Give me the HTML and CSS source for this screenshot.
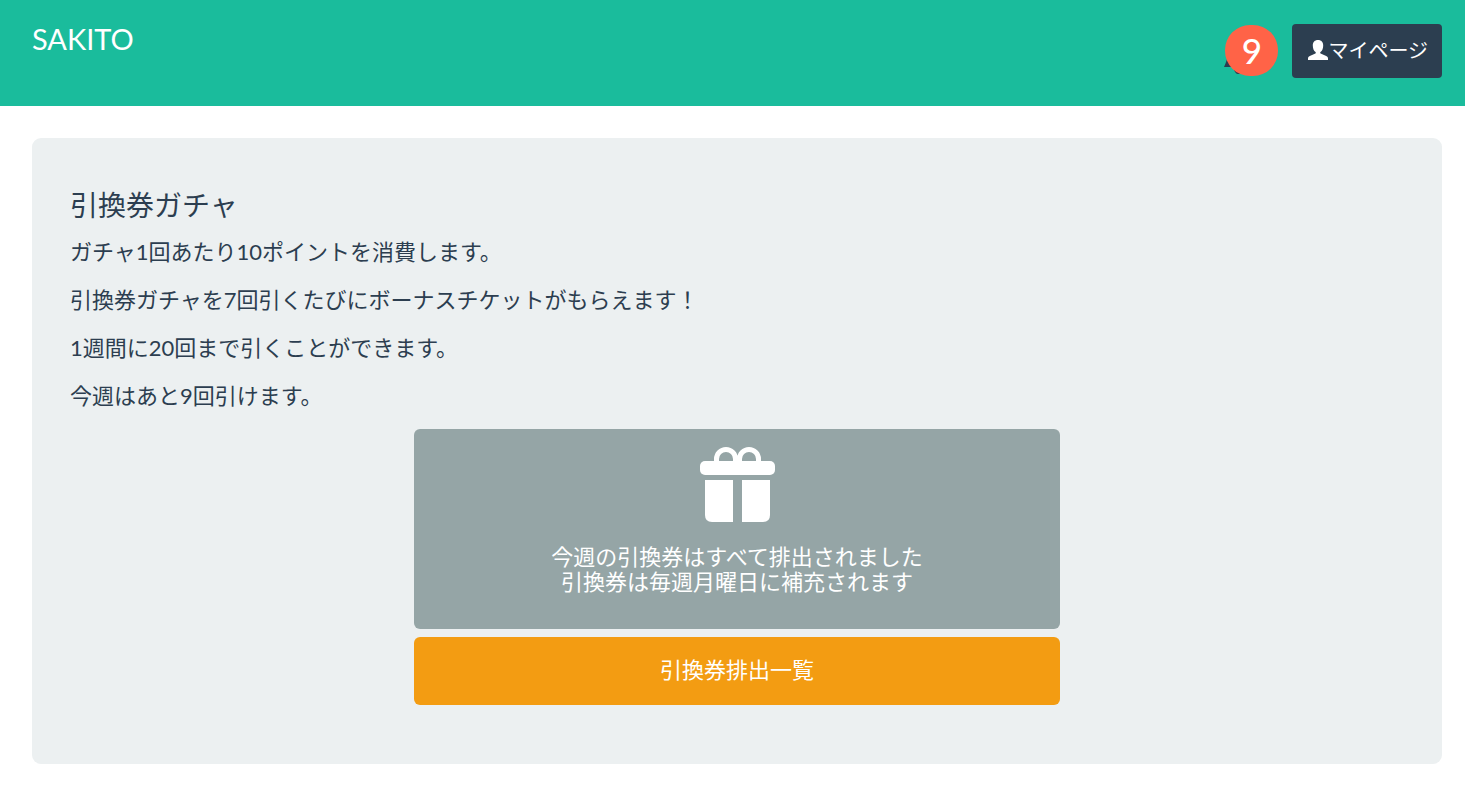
FILE: index.html
```html
<!DOCTYPE html>
<html lang="ja">
<head>
<meta charset="utf-8">
<meta name="viewport" content="width=device-width, initial-scale=1">
<title>SAKITO</title>
<link rel="stylesheet" href="styles.css">
</head>
<body>
<header class="navbar">
  <a class="brand" href="#">SAKITO</a>
  <div class="nav-actions">
    <a class="notifications" href="#" aria-label="お知らせ">
      <svg class="bell" viewBox="0 0 26 26" aria-hidden="true">
        <path d="M13 0a2 2 0 0 1 2 2c4 1 6 4 6 7 0 4 2 6 5 10H0c1-2 2-5 3-8C4 6 5 3 11 2a2 2 0 0 1 2-2zM10 22h8c0 3-2 4-4 4s-3-2-4-4z"/>
      </svg>
      <span class="badge">9</span>
    </a>
    <button class="mypage" type="button">
      <svg class="user" viewBox="0 0 20 20" aria-hidden="true">
        <path d="M10 0c3.300 0 5.200 2.200 5.200 5.500 0 2.900-1 5.300-2.700 6.500-.4.300-.4 1.300.1 1.600l5.600 2.500c1.200.6 1.800 1.400 1.800 2.400V20H0v-1.500c0-1 .6-1.800 1.800-2.400l5.600-2.500c.5-.3.5-1.300.1-1.600C5.800 10.800 4.800 8.400 4.800 5.500 4.800 2.200 6.700 0 10 0z"/>
      </svg><span>マイページ</span>
    </button>
  </div>
</header>
<main class="panel">
  <h1 class="title">引換券ガチャ</h1>
  <p class="text">ガチャ1回あたり10ポイントを消費します。</p>
  <p class="text">引換券ガチャを7回引くたびにボーナスチケットがもらえます！</p>
  <p class="text">1週間に20回まで引くことができます。</p>
  <p class="text">今週はあと9回引けます。</p>
  <div class="actions">
    <button class="action draw" type="button">
      <svg class="gift" viewBox="0 0 75 75" aria-hidden="true">
        <path fill="none" stroke="#fff" stroke-width="5" d="M16.500 15v-3a9.500 9.500 0 0 1 19 0v3M39.500 15v-3a9.500 9.500 0 0 1 19 0v3"/>
        <rect y="14" width="75" height="14" rx="5"/>
        <path d="M5 33h28v42H12q-7 0-7-7zM42 33h28v35q0 7-7 7H42z"/>
      </svg>
      <span>今週の引換券はすべて排出されました<br>引換券は毎週月曜日に補充されます</span>
    </button>
    <button class="action list" type="button">引換券排出一覧</button>
  </div>
</main>
</body>
</html>
```
FILE: styles.css
```css
* {
  box-sizing: border-box;
}

body {
  margin: 0;
  background: #fff;
  color: #2c3e50;
  font-family: Lato, "Noto Sans CJK JP", sans-serif;
  font-size: 22px;
  line-height: 32px;
}

button {
  border: 0;
  color: #fff;
  font: inherit;
  cursor: pointer;
}

.navbar {
  display: flex;
  align-items: flex-start;
  justify-content: space-between;
  min-height: 106px;
  padding: 24px 23px 24px 32px;
  background: #1abc9c;
}

.brand {
  color: #fff;
  font-size: 29px;
  line-height: 30px;
  text-decoration: none;
}

.nav-actions {
  display: flex;
  gap: 14px;
}

.notifications {
  position: relative;
  width: 54px;
  height: 54px;
}

.bell {
  position: absolute;
  bottom: 4px;
  left: 0;
  width: 26px;
  height: 26px;
  fill: #2c3e50;
}

.badge {
  position: absolute;
  top: 1px;
  right: 0;
  width: 53px;
  height: 51px;
  border-radius: 25px;
  background: #ff6347;
  color: #fff;
  font-size: 35px;
  font-weight: 500;
  line-height: 50px;
  text-align: center;
}

.mypage {
  display: flex;
  align-items: center;
  height: 54px;
  padding: 0 14px 2px 16px;
  border-radius: 4px;
  background: #2c3e50;
  font-size: 20px;
}

.user {
  width: 20px;
  height: 20px;
  fill: #fff;
}

.panel {
  margin: 32px 23px 28px 32px;
  padding: 48px 38px 59px;
  border-radius: 9px;
  background: #ecf0f1;
}

.title {
  margin: 0 0 11px;
  font-size: 28px;
  font-weight: 400;
  line-height: 39px;
}

.text {
  margin: 0 0 16px;
}

.actions {
  display: flex;
  flex-direction: column;
  gap: 8px;
  width: calc(50% - 21px);
  margin: 17px auto 0;
}

.action {
  padding: 17px 18px 19px;
  border-radius: 6px;
  line-height: 32px;
}

.draw {
  display: flex;
  flex-direction: column;
  align-items: center;
  gap: 22px;
  padding: 18px 18px 35px;
  background: #95a5a6;
  line-height: 25px;
}

.gift {
  width: 75px;
  height: 75px;
  fill: #fff;
}

.list {
  background: #f39c12;
}
```
